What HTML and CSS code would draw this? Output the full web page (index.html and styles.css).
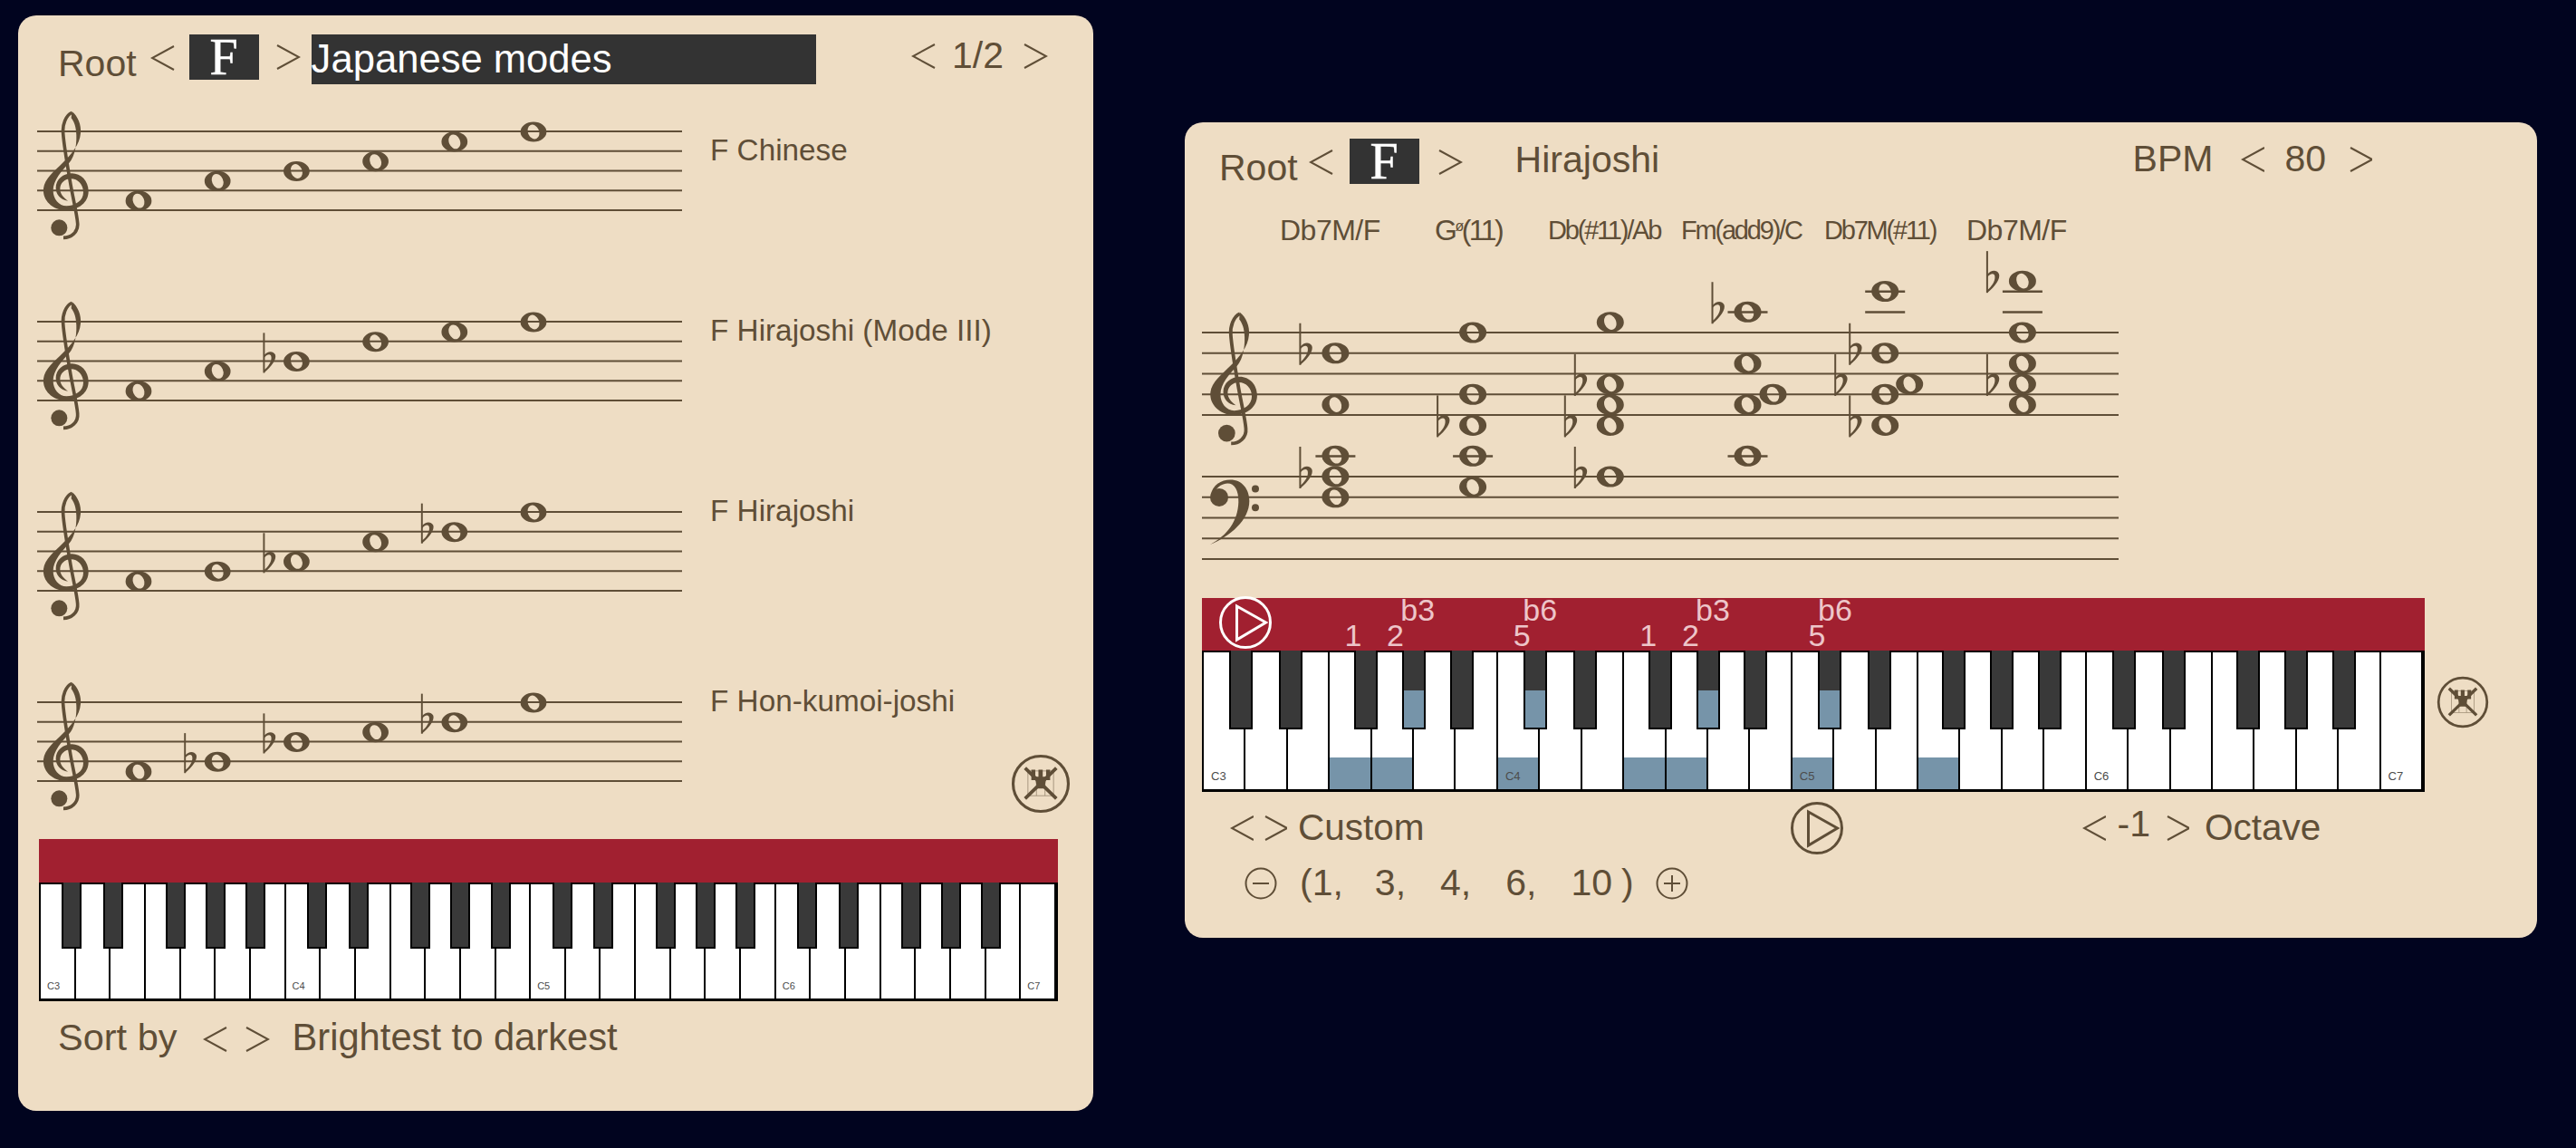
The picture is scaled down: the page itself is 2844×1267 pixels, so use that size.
FILE: index.html
```html
<!DOCTYPE html>
<html lang="en">
<head>
    <meta charset="UTF-8">
    <meta name="viewport" content="width=device-width, initial-scale=1.0">
    <title>Scale Explorer</title>
    <link rel="stylesheet" href="styles.css">
</head>
<body>
    <!-- shared drawings -->
    <svg class="defs" aria-hidden="true">
        <g id="treble">
            <path fill="currentColor" d="M178 40C198 55 210 85 207 112C204 150 176 182 149 209C119 239 88 262 84 295C80 335 115 366 155 367C200 368 233 342 233 305C233 270 208 245 178 245C150 245 125 265 125 293C125 315 140 333 165 336C150 325 139 312 139 297C139 277 155 263 175 263C198 263 216 282 216 308C216 335 190 353 160 353C135 353 116 330 116 302C116 268 145 236 168 212C190 188 196 140 192 105C190 85 184 72 176 62Z"/>
            <path fill="none" stroke="currentColor" stroke-width="11" d="M178 44C158 52 146 85 149 112C151 140 160 200 172 270C180 320 195 380 197 410C200 440 175 458 150 458"/>
            <circle fill="currentColor" cx="136" cy="425" r="27"/>
        </g>
        <g id="bass" fill="currentColor">
            <path d="M48 812C105 782 140 735 142 672C143 632 128 610 106 610C90 610 72 620 62 640L50 650C55 615 85 598 115 598C155 598 178 630 178 668C178 730 115 785 48 812Z"/>
            <circle cx="78" cy="656" r="30"/>
            <circle cx="198" cy="628" r="12"/>
            <circle cx="198" cy="690" r="12"/>
        </g>
        <path id="note" fill="currentColor" fill-rule="evenodd" d="M-15 0A15 11.5 0 1 1 15 0A15 11.5 0 1 1 -15 0ZM-3.4 -7.9A8.6 6.4 67 1 0 3.4 7.9A8.6 6.4 67 1 0 -3.4 -7.9Z"/>
        <g id="flat" fill="currentColor">
            <rect x="-1" y="-33" width="2" height="46"/>
            <path d="M0 -7C4 -12 10 -13 13 -8C15 -3 9 6 0 13L0 10C5 6 9 0 8.5 -5C8 -10 3 -8 0 -4Z"/>
        </g>
        <g id="play">
            <circle cx="30" cy="30" r="27.5" fill="none" stroke="currentColor" stroke-width="3"/>
            <path d="M20.5 12L52.5 30L20.5 49Z" fill="none" stroke="currentColor" stroke-width="3"/>
        </g>
        <g id="no-keys">
            <circle cx="105" cy="105" r="97" fill="none" stroke="currentColor" stroke-width="10"/>
            <g fill="none" stroke="currentColor" stroke-width="3" opacity="0.5">
                <rect x="60" y="60" width="90" height="87"/>
                <path d="M90 90V147M120 90V147"/>
            </g>
            <path fill="currentColor" d="M72 56H86V92H72ZM97 56H112V100H97ZM124 56H138V92H124ZM85 80H125L118 122H92Z"/>
            <path fill="none" stroke="currentColor" stroke-width="12" d="M50 50L160 157M160 50L50 157"/>
        </g>
        <path id="chev-left" fill="none" stroke="currentColor" stroke-width="2" d="M26 1L2 14L26 27"/>
        <path id="chev-right" fill="none" stroke="currentColor" stroke-width="2" d="M2 1L26 14L2 27"/>
    </svg>

    <section class="panel panel-scales">
        <div class="scales-head">
            <span class="big root-label">Root</span>
            <svg class="chev chev-a"><use href="#chev-left"/></svg>
            <span class="root-box">F</span>
            <svg class="chev chev-b"><use href="#chev-right"/></svg>
            <span class="family-box">Japanese modes</span>
            <div class="pager">
                <svg class="chev"><use href="#chev-left"/></svg>
                <span class="big">1/2</span>
                <svg class="chev"><use href="#chev-right"/></svg>
            </div>
        </div>

        <div class="scale-row">
            <svg class="staff" id="scale-1"></svg>
            <span class="scale-name scale-name-low">F Chinese</span>
        </div>
        <div class="scale-row">
            <svg class="staff" id="scale-2"></svg>
            <span class="scale-name scale-name-mid">F Hirajoshi (Mode III)</span>
        </div>
        <div class="scale-row">
            <svg class="staff" id="scale-3"></svg>
            <span class="scale-name">F Hirajoshi</span>
        </div>
        <div class="scale-row scale-row-last">
            <svg class="staff" id="scale-4"></svg>
            <span class="scale-name">F Hon-kumoi-joshi</span>
            <svg class="no-keys no-keys-big" viewBox="0 0 210 210"><use href="#no-keys"/></svg>
        </div>

        <div class="piano piano-small">
            <div class="piano-bar"></div>
            <div class="keys" id="keys-scales"></div>
        </div>

        <div class="sort-row">
            <span class="big">Sort by</span>
            <svg class="chev sort-prev"><use href="#chev-left"/></svg>
            <svg class="chev sort-next"><use href="#chev-right"/></svg>
            <span class="big sort-value">Brightest to darkest</span>
        </div>
    </section>

    <section class="panel panel-chords">
        <div class="chords-head">
            <span class="big root-label">Root</span>
            <svg class="chev chev-c"><use href="#chev-left"/></svg>
            <span class="root-box root-box-right">F</span>
            <svg class="chev chev-d"><use href="#chev-right"/></svg>
            <span class="big scale-title">Hirajoshi</span>
            <div class="tempo">
                <span class="big">BPM</span>
                <svg class="chev chev-narrow tempo-prev"><use href="#chev-left"/></svg>
                <span class="big tempo-value">80</span>
                <svg class="chev chev-narrow tempo-next"><use href="#chev-right"/></svg>
            </div>
        </div>

        <div class="chord-names">
            <span>Db7M/F</span>
            <span class="chord-half">G<small>ø</small>(11)</span>
            <span class="chord-tight">Db(#11)/Ab</span>
            <span class="chord-tight">Fm(add9)/C</span>
            <span class="chord-tight">Db7M(#11)</span>
            <span>Db7M/F</span>
        </div>

        <svg class="score" id="score"></svg>

        <div class="piano-row">
            <div class="piano piano-large">
                <div class="piano-bar" id="bar-chords">
                    <svg class="play play-bar" viewBox="0 0 60 60"><use href="#play"/></svg>
                </div>
                <div class="keys" id="keys-chords"></div>
            </div>
            <svg class="no-keys no-keys-small" viewBox="0 0 210 210"><use href="#no-keys"/></svg>
        </div>

        <div class="controls">
            <svg class="chev chev-narrow"><use href="#chev-left"/></svg>
            <svg class="chev chev-narrow custom-next"><use href="#chev-right"/></svg>
            <span class="big custom-label">Custom</span>
            <svg class="play play-main" viewBox="0 0 60 60"><use href="#play"/></svg>
            <svg class="chev chev-narrow octave-prev"><use href="#chev-left"/></svg>
            <span class="big octave-value">-1</span>
            <svg class="chev chev-narrow octave-next"><use href="#chev-right"/></svg>
            <span class="big octave-label">Octave</span>
        </div>

        <div class="degrees">
            <svg class="round-btn" viewBox="0 0 36 36">
                <circle cx="18" cy="18" r="16.5"/>
                <path d="M9 18H27"/>
            </svg>
            <span class="big degree-first">(1,</span>
            <span class="big degree">3,</span>
            <span class="big degree degree-wide">4,</span>
            <span class="big degree degree-wide">6,</span>
            <span class="big degree degree-wide">10</span>
            <span class="big degree-close">)</span>
            <svg class="round-btn round-btn-plus" viewBox="0 0 36 36">
                <circle cx="18" cy="18" r="16.5"/>
                <path d="M9 18H27M18 9V27"/>
            </svg>
        </div>
    </section>

    <script src="script.js"></script>
</body>
</html>
```

FILE: styles.css
```css
* {
    box-sizing: border-box;
}
body {
    margin: 0;
    height: 1267px;
    overflow: hidden;
    padding: 17px 0 0 20px;
    display: flex;
    align-items: flex-start;
    gap: 101px;
    background-color: #01041f;
    color: #5f4e37;
    font-family: "Liberation Sans", Arial, sans-serif;
}
.defs {
    position: absolute;
    width: 0;
    height: 0;
}
.panel {
    flex: none;
    background-color: #eeddc4;
    border-radius: 20px;
}
.panel-scales {
    width: 1187px;
    height: 1209px;
    padding: 21px 25px 0 21px;
}
.panel-chords {
    width: 1493px;
    height: 900px;
    margin-top: 118px;
    padding: 18px 25px 0 19px;
}
.big {
    font-size: 41px;
    line-height: 41px;
    white-space: nowrap;
}
.chev {
    flex: none;
    width: 28px;
    height: 28px;
}
.chev-narrow {
    width: 26px;
}

/* scales panel */
.scales-head {
    display: flex;
    align-items: flex-start;
    height: 55px;
    margin: 0 25px 27px 23px;
}
.root-label {
    margin-top: 12px;
}
.chev-a {
    margin: 12px 0 0 15px;
}
.chev-b {
    margin: 11px 0 0 18px;
}
.root-box {
    flex: none;
    width: 77px;
    height: 50px;
    margin-left: 15px;
    background-color: #333;
    color: #fff;
    font-family: "Liberation Serif", serif;
    font-size: 56px;
    line-height: 50px;
    text-align: center;
    -webkit-text-stroke: 0.5px #fff;
}
.family-box {
    flex: none;
    width: 557px;
    height: 55px;
    margin-left: 12px;
    background-color: #333;
    color: #fff;
    font-size: 43.6px;
    line-height: 54px;
}
.pager {
    display: flex;
    align-items: flex-start;
    gap: 19px;
    margin-left: auto;
    padding-top: 10px;
}
.pager .big {
    margin: -7px 2px 0 -2px;
}
.scale-row {
    display: flex;
    align-items: flex-start;
    height: 210px;
}
.scale-row-last {
    height: 176px;
}
.staff {
    flex: none;
    width: 712px;
    height: 210px;
    overflow: visible;
}
.scale-name {
    margin: 7px 0 0 31px;
    font-size: 33.3px;
    line-height: 33px;
    white-space: nowrap;
}
.scale-name-low {
    margin-top: 29px;
}
.scale-name-mid {
    margin-top: 18px;
}
.no-keys {
    flex: none;
}
.no-keys-big {
    width: 66px;
    height: 66px;
    margin: 82px 0 0 auto;
}
.sort-row {
    display: flex;
    align-items: flex-start;
    margin: 19px 0 0 23px;
}
.sort-row .big:first-child {
    font-size: 41.5px;
}
.sort-prev {
    margin: 9px 0 0 29px;
}
.sort-next {
    margin: 9px 0 0 18px;
}
.sort-value {
    margin-left: 24px;
    font-size: 41.7px;
}

/* piano */
.piano-small {
    width: 1125px;
    margin-left: 2px;
}
.piano-large {
    flex: none;
    width: 1350px;
}
.piano-bar {
    position: relative;
    background-color: #a12030;
}
.piano-small .piano-bar {
    height: 48px;
}
.piano-large .piano-bar {
    height: 58px;
}
.keys {
    position: relative;
    display: grid;
    grid-template-columns: repeat(29, 1fr);
    background-color: #fff;
    border: 2px solid #000;
    border-bottom-width: 3px;
}
.piano-small .keys {
    height: 131px;
}
.piano-large .keys {
    height: 156px;
}
.white-key {
    position: relative;
    border-right: 2px solid #000;
    color: #4c4c4c;
}
.white-key:last-of-type {
    border-right: 0;
}
.white-key-on::after {
    content: "";
    position: absolute;
    left: 0;
    right: 0;
    bottom: 0;
    height: 23%;
    background-color: #7694a9;
}
.key-name {
    position: absolute;
    z-index: 1;
    bottom: 8px;
    left: 8px;
    line-height: 1;
}
.piano-small .key-name {
    font-size: 11px;
    left: 7px;
}
.piano-large .key-name {
    font-size: 13px;
}
.black-key {
    position: absolute;
    top: -2px;
    z-index: 2;
    transform: translateX(-50%);
    background-color: #393939;
    border: 2px solid #000;
    border-top: 0;
}
.piano-small .black-key {
    width: 22px;
    height: 73px;
}
.piano-large .black-key {
    width: 26px;
    height: 87px;
}
.black-key-on::after {
    content: "";
    position: absolute;
    left: 0;
    right: 0;
    bottom: 0;
    height: 41px;
    background-color: #7694a9;
}
.interval {
    position: absolute;
    top: 24px;
    transform: translateX(-50%);
    color: #edc5c9;
    font-size: 34px;
    line-height: 1;
}
.interval-high {
    top: -4px;
}

/* chords panel */
.chords-head {
    display: flex;
    align-items: flex-start;
    height: 50px;
    margin: 0 157px 0 19px;
}
.chev-c {
    margin: 12px 0 0 12px;
}
.chev-d {
    margin: 12px 0 0 20px;
}
.root-box-right {
    margin-left: 17px;
}
.scale-title {
    margin: 3px 0 0 58px;
}
.tempo {
    display: flex;
    align-items: flex-start;
    margin: 9px 0 0 auto;
}
.tempo .big {
    margin-top: -7px;
}
.tempo-prev {
    margin-left: 31px;
}
.tempo .tempo-value {
    margin-left: 22px;
}
.tempo-next {
    margin-left: 25px;
}
.chord-names {
    display: grid;
    grid-template-columns: 171px 125px 147px 158px 157px auto;
    align-items: baseline;
    height: 30px;
    margin-top: 35px;
    margin-bottom: 2px;
    padding-left: 86px;
    font-size: 32px;
    line-height: 32px;
    letter-spacing: -0.5px;
    white-space: nowrap;
}
.chord-half {
    letter-spacing: -2.5px;
}
.chord-half small {
    position: relative;
    top: -10px;
    font-size: 16px;
}
.chord-tight {
    position: relative;
    top: -1px;
    font-size: 29px;
    letter-spacing: -2.2px;
}
.score {
    display: block;
    width: 1012px;
    height: 350px;
    overflow: visible;
}
.piano-row {
    display: flex;
    align-items: flex-start;
    margin-top: 40px;
}
.no-keys-small {
    width: 58px;
    height: 58px;
    margin: 86px 0 0 13px;
}
.play {
    display: block;
    width: 60px;
    height: 60px;
}
.play-bar {
    margin-left: 18px;
    color: #fff;
    position: absolute;
    top: -3px;
}
.controls {
    display: flex;
    align-items: center;
    height: 41px;
    margin-top: 19px;
    padding-left: 31px;
}
.custom-next {
    margin-left: 11px;
}
.custom-label {
    margin-left: 12px;
    font-size: 40.5px;
}
.play-main {
    margin-left: 403px;
}
.octave-prev {
    margin-left: 263px;
}
.octave-value {
    margin: -9px 0 0 13px;
}
.octave-next {
    margin-left: 17px;
}
.octave-label {
    margin-left: 17px;
    font-size: 40.5px;
}
.degrees {
    display: flex;
    align-items: center;
    height: 41px;
    margin-top: 20px;
    padding-left: 47px;
}
.round-btn {
    flex: none;
    width: 36px;
    height: 36px;
    fill: none;
    stroke: currentColor;
    stroke-width: 2;
}
.degree-first {
    margin-left: 25px;
}
.degree {
    margin-left: 35px;
}
.degree-wide {
    margin-left: 38px;
}
.degree-close {
    margin-left: 10px;
}
.round-btn-plus {
    margin-left: 24px;
}
```

FILE: script.js
```js
// staff positions count half-spaces up from the bottom line, "b" marks a flat
const scales = {
    'scale-1': ['1', '3', '4', '5', '7', '8'],
    'scale-2': ['1', '3', '4b', '6', '7', '8'],
    'scale-3': ['1', '2', '3b', '5', '6b', '8'],
    'scale-4': ['1', '2b', '4b', '5', '6b', '8']
};

// [position, flat offset, note offset]
const chords = [
    { treble: [[6, -39], [1]], bass: [[10], [8, -39], [6]] },
    { treble: [[8], [2], [-1, -39]], bass: [[10], [7]] },
    { treble: [[9], [3, -39], [1], [-1, -50]], bass: [[8, -39]] },
    { treble: [[10, -39], [5], [2, null, 28], [1]], bass: [[10]] },
    { treble: [[12], [6, -39], [3, -55, 27], [2], [-1, -39]], bass: [] },
    { treble: [[13, -39], [8], [5], [3, -39], [1]], bass: [] }
];

function staffLines(top, step, width) {
    let out = '';
    for (let i = 0; i < 5; i++) {
        const y = top + i * step;
        out += `<rect x="0" y="${y - 1}" width="${width}" height="2" fill="currentColor"/>`;
    }
    return out;
}

function renderScales() {
    const step = 21.75;
    const scale = 0.958;
    const bottom = 25 + step * 4;

    Object.keys(scales).forEach((id) => {
        let out = staffLines(25, step, 712);
        out += `<use href="#treble" transform="translate(-21 -10.3) scale(0.3333)"/>`;

        scales[id].forEach((item, index) => {
            const x = 112 + index * 87.2;
            const y = bottom - parseInt(item) * step / 2 + 0.5;
            out += `<use href="#note" transform="translate(${x} ${y}) scale(${scale})"/>`;
            if (item.endsWith('b')) {
                out += `<use href="#flat" transform="translate(${x - 36} ${y}) scale(${scale})"/>`;
            }
        });

        document.getElementById(id).innerHTML = out;
    });
}

function renderScore() {
    const step = 22.75;
    const trebleBottom = 188;
    const bassBottom = 347;
    let out = staffLines(trebleBottom - step * 4, step, 1012);
    out += staffLines(bassBottom - step * 4, step, 1012);
    out += `<use href="#treble" transform="translate(-19.7 61) scale(0.346)"/>`;
    out += `<use href="#bass" transform="translate(-7 60.3) scale(0.3333)"/>`;

    function drawNotes(list, bottom, x) {
        list.forEach(([pos, flat, shift]) => {
            const y = bottom - pos * step / 2;
            for (let p = 10; p <= pos; p += 2) {
                const ly = bottom - p * step / 2;
                out += `<rect x="${x - 22}" y="${ly - 1}" width="44" height="2.5" fill="currentColor"/>`;
            }
            out += `<use href="#note" x="${x + (shift || 0)}" y="${y}"/>`;
            if (flat) {
                out += `<use href="#flat" x="${x + flat}" y="${y}"/>`;
            }
        });
    }

    chords.forEach((chord, index) => {
        const x = 147.4 + index * 151.7;
        drawNotes(chord.treble, trebleBottom, x);
        drawNotes(chord.bass, bassBottom, x);
    });

    document.getElementById('score').innerHTML = out;
}

// black key centres inside one octave, in white key widths
const blackOffsets = [0.89, 2.07, 3.85, 4.99, 6.13];

function renderKeys(id, whiteOn, blackOn) {
    const keys = document.getElementById(id);
    let out = '';

    for (let i = 0; i < 29; i++) {
        const on = whiteOn.includes(i) ? ' white-key-on' : '';
        const name = i % 7 === 0 ? `<span class="key-name">C${3 + i / 7}</span>` : '';
        out += `<div class="white-key${on}">${name}</div>`;
    }

    for (let octave = 0; octave < 4; octave++) {
        blackOffsets.forEach((offset, index) => {
            const pos = octave * 7 + offset;
            const on = blackOn.includes(octave * 5 + index) ? ' black-key-on' : '';
            out += `<div class="black-key${on}" style="left: ${pos / 29 * 100}%"></div>`;
        });
    }

    keys.innerHTML = out;
}

function renderIntervals() {
    const bar = document.getElementById('bar-chords');
    const width = 1350 / 29;
    const labels = [
        ['1', 3.5], ['2', 4.5], ['b3', 5.03], ['5', 7.5], ['b6', 7.93],
        ['1', 10.5], ['2', 11.5], ['b3', 12.03], ['5', 14.5], ['b6', 14.93]
    ];

    labels.forEach(([text, pos]) => {
        const label = document.createElement('span');
        label.className = text.startsWith('b') ? 'interval interval-high' : 'interval';
        label.style.left = `${pos * width + 4}px`;
        label.textContent = text;
        bar.appendChild(label);
    });
}

renderScales();
renderScore();
renderKeys('keys-scales', [], []);
renderKeys('keys-chords', [3, 4, 7, 10, 11, 14, 17], [3, 5, 8, 10]);
renderIntervals();
```
